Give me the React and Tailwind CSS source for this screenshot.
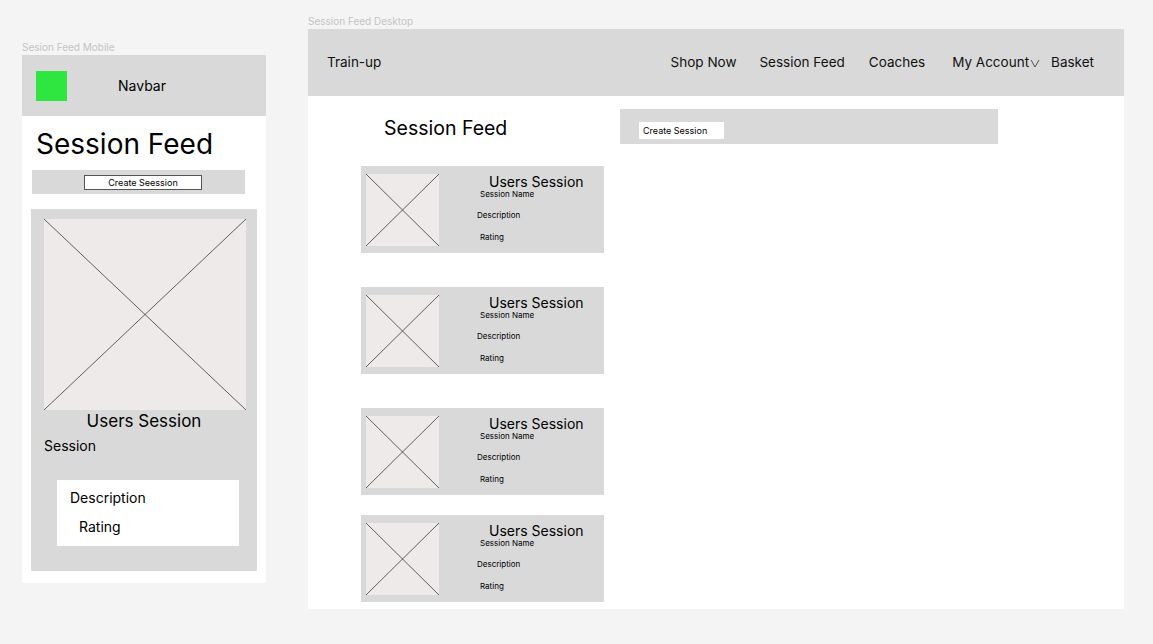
import React from "react";

const font = { fontFamily: "Inter, 'Noto Sans', sans-serif" };

const Placeholder = ({ className }) => (
  <div className={`bg-[#efeaea] ${className}`}>
    <svg width="100%" height="100%" viewBox="0 0 100 100" preserveAspectRatio="none" className="block">
      <line x1="0" y1="0" x2="100" y2="100" stroke="#3a3a3a" strokeWidth="0.8" vectorEffect="non-scaling-stroke" />
      <line x1="100" y1="0" x2="0" y2="100" stroke="#3a3a3a" strokeWidth="0.8" vectorEffect="non-scaling-stroke" />
    </svg>
  </div>
);

const SessionCard = ({ className }) => (
  <div className={`flex h-[87px] w-[243px] bg-[#d9d9d9] pl-[5px] pt-[8px] ${className}`}>
    <Placeholder className="h-[72px] w-[73px] shrink-0" />
    <div className="flex-1 text-black">
      <p className="ml-[50px] -mt-[1px] text-[14px] leading-[17px]">Users Session</p>
      <p className="ml-[41px] -mt-[1px] text-[8px] leading-[10px]">Session Name</p>
      <p className="ml-[38px] mt-[11px] text-[8px] leading-[10px]">Description</p>
      <p className="ml-[41px] mt-[12px] text-[8px] leading-[10px]">Rating</p>
    </div>
  </div>
);

const MobileFrame = () => (
  <div className="ml-[22px] pt-[41px]">
    <p className="h-[14px] text-[10px] leading-[12px] text-[#c4c4c4]">Sesion Feed Mobile</p>
    <div className="flex h-[528px] w-[244px] flex-col bg-white">
      <div className="flex h-[61px] items-center bg-[#d9d9d9] pl-[14px]">
        <div className="h-[30px] w-[31px] bg-[#2ee63f]" />
        <span className="ml-[51px] text-[14px] text-black">Navbar</span>
      </div>
      <h1 className="ml-[14px] mt-[10px] text-[28px] leading-[36px] text-black">Session Feed</h1>
      <div className="ml-[10px] mt-[8px] flex h-[24px] w-[213px] items-start bg-[#d9d9d9] pl-[52px] pt-[5px]">
        <div className="flex h-[15px] w-[118px] items-center justify-center border border-[#555] bg-white text-[9px] leading-[11px] text-black">
          Create Seession
        </div>
      </div>
      <div className="ml-[9px] mt-[15px] flex h-[362px] w-[226px] flex-col bg-[#d9d9d9] pt-[10px]">
        <Placeholder className="ml-[13px] h-[191px] w-[202px]" />
        <p className="mt-[1px] text-center text-[17px] leading-[20px] text-black">Users Session</p>
        <p className="ml-[13px] mt-[6px] text-[14px] leading-[18px] text-black">Session</p>
        <div className="ml-[26px] mt-[25px] h-[66px] w-[182px] bg-white pt-[9px]">
          <p className="ml-[13px] text-[14px] leading-[18px] text-black">Description</p>
          <p className="ml-[22px] mt-[11px] text-[14px] leading-[18px] text-black">Rating</p>
        </div>
      </div>
    </div>
  </div>
);

const DesktopFrame = () => (
  <div className="ml-[42px] pt-[15px]">
    <p className="h-[14px] text-[10px] leading-[12px] text-[#c4c4c4]">Session Feed Desktop</p>
    <div className="flex h-[580px] w-[816px] flex-col bg-white">
      <nav className="flex h-[67px] items-center bg-[#d9d9d9] pl-[19px] pr-[30px] text-[13.5px] text-[#111]">
        <span>Train-up</span>
        <div className="ml-auto flex items-center">
          <span>Shop Now</span>
          <span className="ml-[23px]">Session Feed</span>
          <span className="ml-[24px]">Coaches</span>
          <span className="ml-[27px] flex items-center">
            My Account
            <svg width="10" height="9" viewBox="0 0 10 9" className="ml-[1px] mt-[2px]">
              <polyline points="1,1 5,8 9,1" fill="none" stroke="#333" strokeWidth="0.8" />
            </svg>
          </span>
          <span className="ml-[11px]">Basket</span>
        </div>
      </nav>
      <div className="flex">
        <div className="ml-[53px] flex w-[243px] flex-col pt-[20px]">
          <h2 className="ml-[23px] text-[19.5px] leading-[24px] text-black">Session Feed</h2>
          <SessionCard className="mt-[26px]" />
          <SessionCard className="mt-[34px]" />
          <SessionCard className="mt-[34px]" />
          <SessionCard className="mt-[20px]" />
        </div>
        <div className="ml-[16px] mt-[13px] flex h-[35px] w-[378px] items-start bg-[#d9d9d9] pl-[19px] pt-[13px]">
          <div className="flex h-[17px] w-[85px] items-center bg-white pl-[4px] text-[9px] text-black">
            Create Session
          </div>
        </div>
      </div>
    </div>
  </div>
);

export default function App() {
  return (
    <div style={font} className="flex min-h-[644px] w-full bg-[#f4f4f4]">
      <MobileFrame />
      <DesktopFrame />
    </div>
  );
}
